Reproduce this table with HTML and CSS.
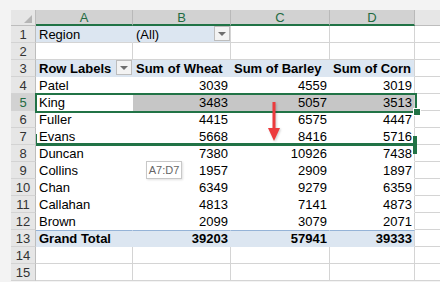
FILE: index.html
```html
<!DOCTYPE html>
<html lang="en">
<head>
    <meta charset="UTF-8">
    <title>Pivot Table - Move Row</title>
    <link rel="stylesheet" href="styles.css">
</head>
<body>
    <div class="sheet">
        <div class="grid">
            <div class="corner"></div>
            <div class="ch">A</div>
            <div class="ch">B</div>
            <div class="ch">C</div>
            <div class="ch">D</div>
            <div class="ch off"></div>

            <div class="rh">1</div>
            <div class="pf nosep">Region</div>
            <div class="pf drop"><span>(All)</span><span class="dd"><i></i></span></div>
            <div></div>
            <div></div>
            <div class="e"></div>

            <div class="rh">2</div>
            <div></div>
            <div></div>
            <div></div>
            <div></div>
            <div class="e"></div>

            <div class="rh">3</div>
            <div class="pv blue b drop"><span>Row Labels</span><span class="dd"><i></i></span></div>
            <div class="pv blue b">Sum of Wheat</div>
            <div class="pv blue b">Sum of Barley</div>
            <div class="pv blue b edge">Sum of Corn</div>
            <div class="e"></div>

            <div class="rh">4</div>
            <div class="pv">Patel</div>
            <div class="pv num">3039</div>
            <div class="pv num">4559</div>
            <div class="pv num edge">3019</div>
            <div class="e"></div>

            <div class="rh on">5</div>
            <div class="pv">King</div>
            <div class="pv num sel">3483</div>
            <div class="pv num sel">5057</div>
            <div class="pv num sel edge">3513</div>
            <div class="e"></div>

            <div class="rh">6</div>
            <div class="pv">Fuller</div>
            <div class="pv num">4415</div>
            <div class="pv num">6575</div>
            <div class="pv num edge">4447</div>
            <div class="e"></div>

            <div class="rh">7</div>
            <div class="pv">Evans</div>
            <div class="pv num">5668</div>
            <div class="pv num">8416</div>
            <div class="pv num edge">5716</div>
            <div class="e"></div>

            <div class="rh">8</div>
            <div class="pv">Duncan</div>
            <div class="pv num">7380</div>
            <div class="pv num">10926</div>
            <div class="pv num edge">7438</div>
            <div class="e"></div>

            <div class="rh">9</div>
            <div class="pv">Collins</div>
            <div class="pv num">1957</div>
            <div class="pv num">2909</div>
            <div class="pv num edge">1897</div>
            <div class="e"></div>

            <div class="rh">10</div>
            <div class="pv">Chan</div>
            <div class="pv num">6349</div>
            <div class="pv num">9279</div>
            <div class="pv num edge">6359</div>
            <div class="e"></div>

            <div class="rh">11</div>
            <div class="pv">Callahan</div>
            <div class="pv num">4813</div>
            <div class="pv num">7141</div>
            <div class="pv num edge">4873</div>
            <div class="e"></div>

            <div class="rh">12</div>
            <div class="pv">Brown</div>
            <div class="pv num">2099</div>
            <div class="pv num">3079</div>
            <div class="pv num edge">2071</div>
            <div class="e"></div>

            <div class="rh">13</div>
            <div class="pv blue b tot">Grand Total</div>
            <div class="pv blue b tot num">39203</div>
            <div class="pv blue b tot num">57941</div>
            <div class="pv blue b tot num edge">39333</div>
            <div class="e"></div>

            <div class="rh">14</div>
            <div></div>
            <div></div>
            <div></div>
            <div></div>
            <div class="e"></div>

            <div class="rh">15</div>
            <div></div>
            <div></div>
            <div></div>
            <div></div>
            <div class="e"></div>
        </div>

        <!-- things drawn over the grid -->
        <div class="selection"></div>
        <div class="handle"></div>
        <div class="insert-bar"></div>
        <div class="cap-left"></div>
        <div class="cap-right"></div>
        <svg class="arrow" width="16" height="44" viewBox="0 0 16 44">
            <rect x="6.5" y="2" width="3" height="27" fill="#ec3b3d"/>
            <polygon points="2,28 14,28 8,41" fill="#ec3b3d"/>
        </svg>
        <div class="tip">A7:D7</div>
    </div>
</body>
</html>
```

FILE: styles.css
```css
body { margin: 0; background: #f3f3f3; font-family: "Liberation Sans", Arial, sans-serif; font-size: 13px; color: #000; overflow: hidden; }
.sheet { position: relative; margin: 10px 0 0 11px; }
.grid { display: grid; grid-template-columns: 25px 97px 98px 99px 85px 40px; grid-template-rows: 16px repeat(15, 17px); }
.grid > div { box-sizing: border-box; background: #fff; border-right: 1px solid #d4d4d4; border-bottom: 1px solid #d4d4d4; padding: 1px 3px 0 3px; line-height: 16px; white-space: nowrap; overflow: hidden; }

.grid > .corner { position: relative; background: #e6e6e6; border-right-color: #bdbdbd; border-bottom-color: #bdbdbd; }
.corner::after { content: ""; position: absolute; right: 3px; bottom: 2px; width: 8px; height: 8px; background: #b5b5b5; clip-path: polygon(100% 0, 100% 100%, 0 100%); }
.grid > .ch { background: #d2d2d2; color: #1f6b41; text-align: center; padding: 0; line-height: 15px; border-right-color: #b9b9b9; border-bottom: 2px solid #217346; }
.grid > .ch.off { background: #e6e6e6; border-bottom: 1px solid #bdbdbd; border-right: none; }
.grid > .rh { background: #e6e6e6; color: #333; text-align: center; padding: 1px 0 0 0; border-right-color: #bdbdbd; border-bottom-color: #d3d3d3; }
.grid > .rh.on { background: #d2d2d2; color: #1f6b41; }
.grid > .e { border-right: none; }

.grid > .pf { background: #dce6f1; }
.grid > .nosep { border-right-color: #dce6f1; }
.grid > .pv { border-color: transparent; }
.grid > .pv.edge { border-right-color: #d4d4d4; }
.grid > .blue { background: #dce6f1; }
.grid > .sel { background: #c6c6c6; }
.grid > .tot { border-top: 1px solid #95b3d7; padding-top: 0; }
.b { font-weight: bold; }
.grid > .num { text-align: right; padding-right: 2px; }

.grid > .drop { display: flex; justify-content: space-between; align-items: flex-start; padding-right: 0; }
.drop .dd { display: flex; align-items: center; justify-content: center; box-sizing: border-box; width: 16px; height: 15px; margin-top: -1px; border: 1px solid #bdbdbd; background: #f3f3f3; }
.dd i { width: 0; height: 0; border-left: 4px solid transparent; border-right: 4px solid transparent; border-top: 4px solid #6e6e6e; }

.selection { position: absolute; left: 24px; top: 83px; width: 382px; height: 20px; box-sizing: border-box; border: 2px solid #217346; }
.handle { position: absolute; left: 402px; top: 98px; width: 6px; height: 6px; background: #217346; border: 1px solid #fff; }
.insert-bar { position: absolute; left: 25px; top: 133px; width: 381px; height: 3px; background: #217346; }
.cap-left { position: absolute; left: 25px; top: 124px; width: 1px; height: 12px; background: #217346; }
.cap-right { position: absolute; left: 402px; top: 126px; width: 4px; height: 18px; background: #217346; }
.arrow { position: absolute; left: 255px; top: 90px; filter: drop-shadow(1px 1px 1px rgba(0,0,0,0.2)); }
.tip { position: absolute; left: 135px; top: 151px; width: 36px; height: 18px; box-sizing: border-box; background: #fff; border: 1px solid #c8c8c8; color: #666; font-size: 11px; line-height: 16px; text-align: center; white-space: nowrap; box-shadow: 1px 1px 2px rgba(0,0,0,0.12); }
```
